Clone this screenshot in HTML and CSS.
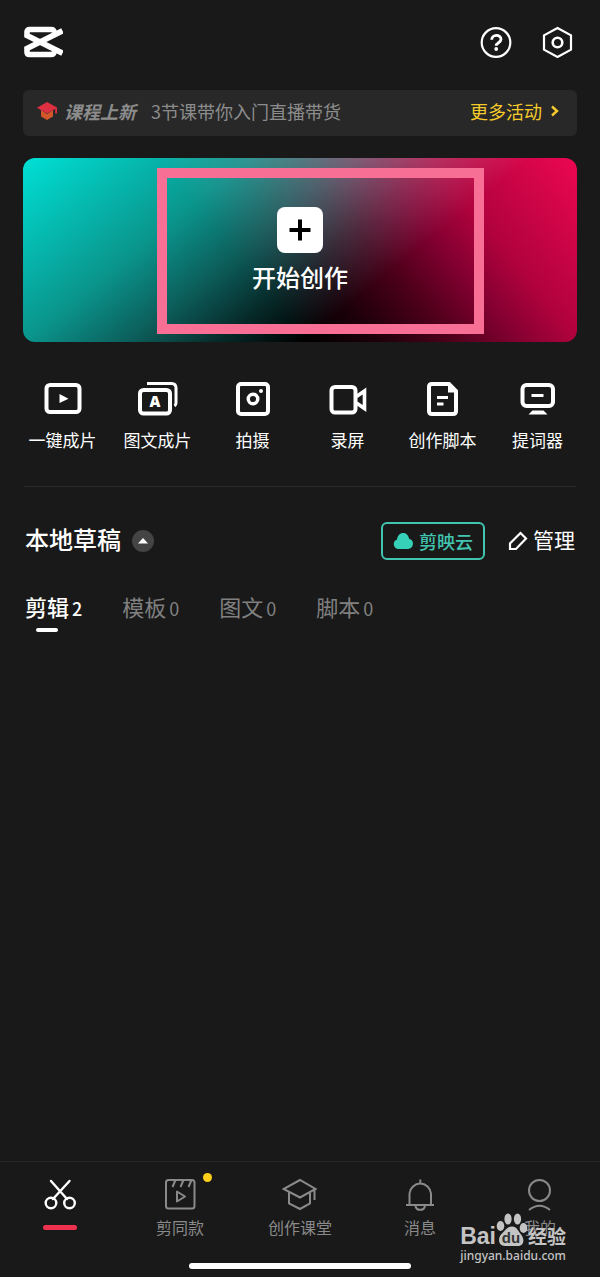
FILE: index.html
```html
<!DOCTYPE html>
<html lang="zh-CN">
<head>
    <meta charset="UTF-8">
    <meta name="viewport" content="width=device-width, initial-scale=1.0">
    <title>剪映</title>
    <link rel="stylesheet" href="styles.css">
</head>
<body>
    <header class="topbar">
        <svg class="logo" viewBox="0 0 40 32" width="40" height="32" fill="none" stroke="#fff" stroke-width="5.600">
            <path d="M39.500 4.800L4 22.500v3.500q0 2.500 2.500 2.500H28q3 0 3-3M39.500 27.200L4 9.500V6q0-2.500 2.500-2.500H28q3 0 3 3"/>
        </svg>
        <div class="topbar-actions">
            <button class="icon-button" aria-label="帮助">
                <svg viewBox="0 0 32 32" width="32" height="32" fill="none" stroke="#fff" stroke-width="2.200">
                    <circle cx="16" cy="16.500" r="14.300"/>
                    <path d="M11.700 13.800c0-6 9.300-5.800 9.300-.5 0 3.500-4.800 3.300-4.800 6.500" stroke-width="2.800"/>
                    <circle cx="16.200" cy="23" r="1.900" fill="#fff" stroke="none"/>
                </svg>
            </button>
            <button class="icon-button" aria-label="设置">
                <svg viewBox="0 0 32 32" width="32" height="32" fill="none" stroke="#fff" stroke-width="2.200">
                    <path d="M16.500 2L30 9.300v14.400L16.500 31 3 23.700V9.300z"/>
                    <circle cx="16.500" cy="16.500" r="4.800" stroke-width="2.600"/>
                </svg>
            </button>
        </div>
    </header>

    <main class="content">
        <div class="notice">
            <svg viewBox="0 0 22 20" width="22" height="20">
                <path d="M5 9l6 4 6-4v6.500L11 19l-6-3.500z" fill="#d1562a"/>
                <path d="M11 1l10 5.500v6h-1.800V8L11 12.500 1 6.800z" fill="#df3041"/>
            </svg>
            <strong class="notice-tag">课程上新</strong>
            <span class="notice-text">3节课带你入门直播带货</span>
            <a class="notice-more" href="#">更多活动
                <svg viewBox="0 0 8 12" width="8" height="12" fill="none" stroke="#f5cb2b" stroke-width="2.400">
                    <path d="M1 1.500L6 6l-5 4.500"/>
                </svg>
            </a>
        </div>

        <div class="hero">
            <button class="create">
                <span class="create-plus">
                    <svg viewBox="0 0 22 22" width="22" height="22" stroke="#000" stroke-width="4">
                        <path d="M11 0.500v21M0.500 11h21"/>
                    </svg>
                </span>
                开始创作
            </button>
            <div class="hero-frame"></div>
        </div>
    </main>

    <div class="tools">
        <button class="tool">
            <svg viewBox="0 0 40 40" width="40" height="40" fill="none" stroke="#fff" stroke-width="4">
                <rect x="3.500" y="6" width="33" height="27" rx="3.500"/>
                <path d="M16.500 15l9 4.700-9 4.300z" fill="#fff" stroke="none"/>
            </svg>
            一键成片
        </button>
        <button class="tool">
            <svg viewBox="0 0 40 40" width="40" height="40" fill="none" stroke="#fff" stroke-width="4">
                <rect x="2" y="11" width="30" height="23.500" rx="3.500"/>
                <path d="M9 4.500h24.500q4.500 0 4.500 4.500V24q0 2-1.500 3" stroke-width="3"/>
                <text class="tool-letter" x="17" y="28" text-anchor="middle">A</text>
            </svg>
            图文成片
        </button>
        <button class="tool">
            <svg viewBox="0 0 40 40" width="40" height="40" fill="none" stroke="#fff" stroke-width="4">
                <rect x="5" y="5" width="30" height="30" rx="3"/>
                <circle cx="20" cy="20" r="4.800" stroke-width="3.400"/>
                <circle cx="28" cy="12" r="2" fill="#fff" stroke="none"/>
            </svg>
            拍摄
        </button>
        <button class="tool">
            <svg viewBox="0 0 40 40" width="40" height="40" fill="none" stroke="#fff" stroke-width="4">
                <rect x="3.500" y="8" width="24" height="25.500" rx="3.500"/>
                <path d="M28.500 17.500l8-5.500v17.500l-8-5.500" stroke-width="3.600"/>
            </svg>
            录屏
        </button>
        <button class="tool">
            <svg viewBox="0 0 40 40" width="40" height="40" fill="none" stroke="#fff" stroke-width="4">
                <path d="M26 5H9Q6 5 6 8v24q0 3 3 3h21q3 0 3-3V12z"/>
                <path d="M25 4v9.500h9z" fill="#fff" stroke="none"/>
                <path d="M14 18.500h11M14 25h6.500" stroke-width="3"/>
            </svg>
            创作脚本
        </button>
        <button class="tool">
            <svg viewBox="0 0 40 40" width="40" height="40" fill="none" stroke="#fff" stroke-width="4">
                <rect x="4.500" y="6" width="30.500" height="21" rx="4"/>
                <path d="M13.500 16.500h12" stroke-width="3"/>
                <path d="M14.500 31.500h11l4 4H10.500z" fill="#fff" stroke="none"/>
            </svg>
            提词器
        </button>
    </div>

    <section class="drafts">
        <div class="drafts-head">
            <h1 class="drafts-title">本地草稿</h1>
            <button class="collapse" aria-label="收起">
                <svg viewBox="0 0 10 6" width="10" height="6"><path d="M5 0l5 5.500H0z" fill="#fff"/></svg>
            </button>
            <button class="cloud">
                <svg viewBox="0 0 20 16" width="20" height="16" fill="#36d0b9">
                    <path d="M5 16a5 5 0 0 1-1-9.600C4.500 2.500 7 0 10.200 0c3 0 5.200 2 5.900 5.800A5.200 5.200 0 0 1 15 16z"/>
                </svg>
                剪映云
            </button>
            <button class="manage">
                <svg viewBox="0 0 20 20" width="20" height="20" fill="none" stroke="#fff" stroke-width="2.200">
                    <path d="M2 18v-5.500L12.500 2l5.500 5.500L8 18z"/>
                </svg>
                <span class="manage-label">管理</span>
            </button>
        </div>
        <nav class="tabs">
            <button class="tab active"><span class="tab-name">剪辑</span><span class="tab-count">2</span></button>
            <button class="tab"><span class="tab-name">模板</span><span class="tab-count">0</span></button>
            <button class="tab"><span class="tab-name">图文</span><span class="tab-count">0</span></button>
            <button class="tab"><span class="tab-name">脚本</span><span class="tab-count">0</span></button>
        </nav>
    </section>

    <footer class="bottom">
        <nav class="bottom-nav">
            <a class="nav-item current" href="#" aria-label="剪辑">
                <svg viewBox="0 0 36 36" width="36" height="36" fill="none" stroke="#fff" stroke-width="2.400">
                    <path d="M9 4l16 18M27.500 4L11 22" stroke-linecap="round"/>
                    <circle cx="9" cy="26" r="5.300"/>
                    <circle cx="27.500" cy="26" r="5.300"/>
                </svg>
                <span class="nav-bar"></span>
            </a>
            <a class="nav-item" href="#">
                <svg viewBox="0 0 36 36" width="36" height="36" fill="none" stroke="#8a8a8a" stroke-width="2">
                    <rect x="4" y="3" width="28.500" height="28.500" rx="2.500"/>
                    <path d="M13.500 3l-3 7M21.500 3l-3 7M29.500 3l-3 7M15 14.500v10l8-5z" stroke-linejoin="round"/>
                </svg>
                剪同款
                <span class="nav-dot"></span>
            </a>
            <a class="nav-item" href="#">
                <svg viewBox="0 0 36 36" width="36" height="36" fill="none" stroke="#8a8a8a" stroke-width="2">
                    <path d="M18 3L1.500 12 18 20.500 33.500 12zM7 15.500v11L18 32l10-5.500V16M32.500 12.500V23"/>
                </svg>
                创作课堂
            </a>
            <a class="nav-item" href="#">
                <svg viewBox="0 0 36 36" width="36" height="36" fill="none" stroke="#8a8a8a" stroke-width="2">
                    <path d="M4 28h28M7.500 28V16.500a10.800 11 0 0 1 21.500 0V28M18.300 2.500V6M13.500 29a4.800 4.500 0 0 0 9.500 0"/>
                </svg>
                消息
            </a>
            <a class="nav-item" href="#">
                <svg viewBox="0 0 36 36" width="36" height="36" fill="none" stroke="#8a8a8a" stroke-width="2">
                    <circle cx="17.500" cy="13.500" r="10.500"/>
                    <path d="M7 33q10.500-8.500 21 0"/>
                </svg>
                我的
            </a>
        </nav>
        <div class="home-bar"></div>
        <div class="watermark">
            <div class="watermark-brand">
                <span class="watermark-bai">Bai</span>
                <svg viewBox="0 0 32 34" width="32" height="34" fill="#c4c4c4">
                    <ellipse cx="4.500" cy="13" rx="3.800" ry="5"/>
                    <ellipse cx="12" cy="6" rx="3.600" ry="5.500"/>
                    <ellipse cx="21.500" cy="6" rx="3.600" ry="5.500"/>
                    <ellipse cx="27.500" cy="15" rx="3.800" ry="5"/>
                    <path d="M16 13.500c5 0 6.500 5 9 8 4 4.500 3 11.500-3 11.500H9C2.500 33 1.500 26 5 21.500c3.500-3 6-8 11-8z"/>
                    <text x="15" y="30" class="watermark-du" text-anchor="middle">du</text>
                </svg>
                <span class="watermark-cn">经验</span>
            </div>
            <div class="watermark-url">jingyan.baidu.com</div>
        </div>
    </footer>
</body>
</html>
```
FILE: styles.css
```css
* {
    box-sizing: border-box;
}
body {
    margin: 0;
    min-height: 100vh;
    display: flex;
    flex-direction: column;
    background: #191919;
    color: #fff;
    font-family: "Noto Sans CJK SC", "Noto Sans", sans-serif;
}
button {
    padding: 0;
    border: none;
    background: none;
    color: inherit;
    font: inherit;
    cursor: pointer;
}
a {
    color: inherit;
    text-decoration: none;
}
svg {
    display: block;
    flex-shrink: 0;
}
.topbar {
    display: flex;
    justify-content: space-between;
    padding: 26px 27px 32px 23px;
}
.topbar-actions {
    display: flex;
    gap: 29px;
}
.content {
    padding: 0 23px;
}
.notice {
    display: flex;
    align-items: center;
    height: 46px;
    padding: 0 18px 4px 13px;
    border-radius: 6px;
    background: #282828;
    font-size: 18px;
    line-height: 26px;
    color: #8c8c8c;
}
.notice-tag {
    margin-left: 6px;
    font-style: italic;
    font-weight: 700;
}
.notice-text {
    margin-left: 15px;
}
.notice-more {
    display: flex;
    align-items: center;
    gap: 9px;
    margin-left: auto;
    color: #f5cb2b;
}
.hero {
    position: relative;
    display: flex;
    justify-content: center;
    height: 184px;
    margin-top: 22px;
    border-radius: 12px;
    background-color: #000;
    background-image:
        linear-gradient(141deg, #00e0d5 0%, #0a958c 29%, #0c5c59 43%, #062a29 54%, #000 65%),
        linear-gradient(231deg, #ec0752 0%, #b0023d 21%, #80002f 30%, #480018 40%, #1c0009 50%, #000 60%);
    background-blend-mode: screen;
}
.create {
    display: flex;
    flex-direction: column;
    align-items: center;
    gap: 6px;
    padding-top: 49px;
    font-size: 24px;
    font-weight: 500;
    line-height: 36px;
}
.create-plus {
    display: grid;
    place-items: center;
    width: 46px;
    height: 46px;
    border-radius: 8px;
    background: #fff;
}
.hero-frame {
    position: absolute;
    inset: 10px 93px 8px 134px;
    border: 10px solid #f86f95;
    pointer-events: none;
}
.tools {
    display: grid;
    grid-template-columns: repeat(6, 1fr);
    margin: 37px 15px 0;
}
.tool {
    display: flex;
    flex-direction: column;
    align-items: center;
    gap: 9px;
    font-size: 17px;
    line-height: 24px;
    white-space: nowrap;
}
.tool-letter {
    fill: #fff;
    stroke: none;
    font-family: "Open Sans", sans-serif;
    font-size: 15px;
    font-weight: 800;
}
.drafts {
    margin: 34px 24px 0;
    padding-top: 35px;
    border-top: 1px solid #2b2b2b;
}
.drafts-head {
    display: flex;
    align-items: center;
    padding: 0 1px;
}
.drafts-title {
    margin: 0;
    padding-bottom: 4px;
    font-size: 24px;
    font-weight: 500;
    line-height: 34px;
}
.collapse {
    display: grid;
    place-items: center;
    width: 22px;
    height: 22px;
    margin-left: 11px;
    border-radius: 50%;
    background: #444;
}
.cloud {
    display: flex;
    align-items: center;
    gap: 6px;
    height: 38px;
    margin-left: auto;
    padding: 0 10px;
    border: 2px solid #42c5b0;
    border-radius: 6px;
    color: #42c5b0;
    font-size: 18px;
    font-weight: 500;
    line-height: 26px;
}
.manage {
    display: flex;
    align-items: center;
    gap: 5px;
    margin-left: 23px;
    font-size: 21px;
}
.manage-label {
    padding-bottom: 4px;
    line-height: 30px;
}
.tabs {
    display: flex;
    gap: 40px;
    margin-top: 29px;
    padding: 0 1px;
}
.tab {
    display: flex;
    align-items: baseline;
    gap: 3px;
    color: #808080;
    font-size: 22px;
    line-height: 34px;
}
.tab-count {
    font-size: 18px;
}
.tab.active {
    color: #fff;
    font-weight: 500;
}
.tab-name {
    position: relative;
}
.tab.active .tab-name::after {
    content: "";
    position: absolute;
    bottom: -9px;
    left: 50%;
    width: 22px;
    height: 4px;
    margin-left: -11px;
    border-radius: 2px;
    background: #fff;
}
.bottom {
    position: relative;
    margin-top: auto;
    border-top: 1px solid #272727;
}
.bottom-nav {
    display: grid;
    grid-template-columns: repeat(5, 1fr);
    padding-top: 15px;
}
.nav-item {
    position: relative;
    display: flex;
    flex-direction: column;
    align-items: center;
    gap: 2px;
    color: #8a8a8a;
    font-size: 16px;
    line-height: 24px;
}
.nav-bar {
    width: 34px;
    height: 5px;
    margin-top: 10px;
    border-radius: 3px;
    background: #f0304f;
}
.nav-dot {
    position: absolute;
    top: -4px;
    left: 50%;
    width: 9px;
    height: 9px;
    margin-left: 23px;
    border-radius: 50%;
    background: #fccf1b;
}
.home-bar {
    width: 37%;
    height: 6px;
    margin: 24px auto 8px;
    border-radius: 3px;
    background: #fff;
}
.watermark {
    position: absolute;
    right: 34px;
    bottom: 12px;
    color: #c4c4c4;
}
.watermark-brand {
    display: flex;
    align-items: flex-end;
    height: 34px;
}
.watermark-bai {
    font-family: "Liberation Sans", sans-serif;
    font-size: 23px;
    font-weight: 700;
    line-height: 22px;
}
.watermark-du {
    fill: #333;
    font-family: "Liberation Sans", sans-serif;
    font-size: 15px;
    font-weight: 700;
}
.watermark-cn {
    font-size: 19px;
    font-weight: 700;
    line-height: 22px;
}
.watermark-url {
    font-family: "Noto Sans", sans-serif;
    font-size: 12px;
    font-weight: 500;
    line-height: 18px;
}
```
